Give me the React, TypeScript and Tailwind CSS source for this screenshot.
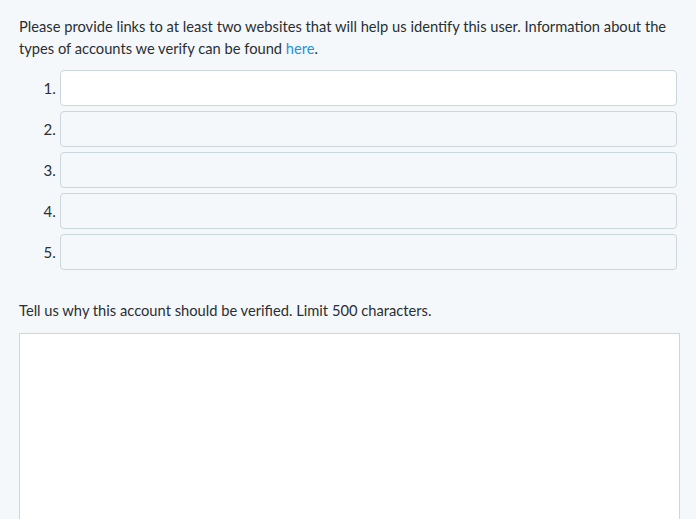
export default function App() {
	const rows = [1, 2, 3, 4, 5];

	return (
		<div className="min-h-[519px] bg-[#f5f8fa] px-[19px] pt-[15px] font-['Lato',sans-serif] text-[14.7px] text-[#292f33]">
			<p className="leading-[22px]">
				Please provide links to at least two websites that will help us identify this user. Information about the
				types of accounts we verify can be found <span className="text-[#1b95e0]">here</span>.
			</p>

			{/* Links */}
			<div className="mt-[11px] flex flex-col gap-[5px]">
				{rows.map((n) => (
					<div key={n} className="flex items-center">
						<span className="w-[38px] pr-[1px] text-right text-[15px]">{n}.</span>
						<input
							type="text"
							className={`ml-[3px] h-[36px] w-[620px] rounded-[4px] border border-[#ccd6dd] ${
								n === 1 ? "bg-white" : "bg-transparent"
							}`}
						/>
					</div>
				))}
			</div>

			{/* Reason */}
			<p className="mt-[29px] leading-[22px]">Tell us why this account should be verified. Limit 500 characters.</p>
			<textarea className="mt-[12px] block h-[200px] w-[661px] resize-none border border-[#ccd6dd] bg-white" />
		</div>
	);
}
